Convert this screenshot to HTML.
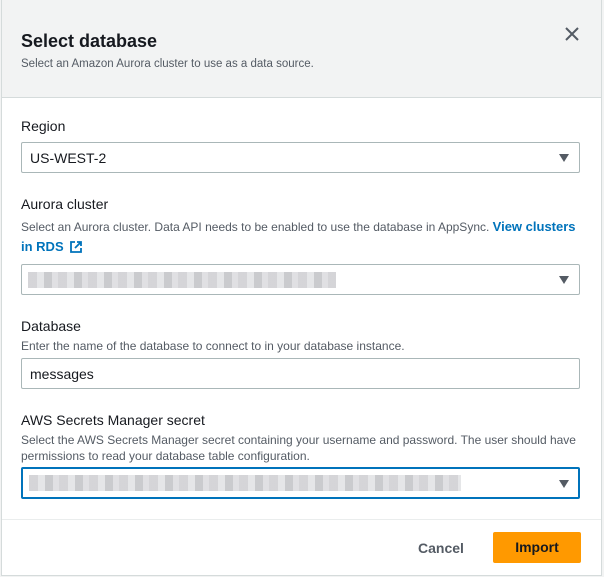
<!DOCTYPE html>
<html><head><meta charset="utf-8"><style>
*{margin:0;padding:0;box-sizing:border-box}
body{width:604px;height:577px;background:#f2f3f3;font-family:"Liberation Sans",sans-serif;position:relative;overflow:hidden;color:#16191f}
.card{position:absolute;left:1px;top:0;width:601px;height:576px;background:#fff;border:1px solid #d5dbdb;border-top:none}
.hdr{position:absolute;left:0;top:0;width:100%;height:98px;background:#f2f3f3;border-bottom:1px solid #d5dbdb}
.a{position:absolute;white-space:nowrap}
.lbl{font-size:14px;color:#16191f}
.desc{font-size:12px;color:#545b64}
.box{position:absolute;width:559px;height:31px;border:1px solid #aab7b8;border-radius:2px;background:#fff}
.tri{position:absolute;right:10px;top:11px;width:0;height:0;border-left:5.5px solid transparent;border-right:5.5px solid transparent;border-top:8px solid #545b64}
.blur{position:absolute;left:6px;top:7px;height:16px;background:repeating-linear-gradient(90deg,#d0d0d4 0 9px,#e2e3e6 9px 16px,#c4c5c9 16px 24px,#dcdde0 24px 30px);opacity:.9}
a{color:#0073bb;font-weight:bold;text-decoration:none}
</style></head><body>
<div class="card">
 <div class="hdr"></div>
 <div class="a" style="left:19px;top:31px;font-size:18px;font-weight:bold">Select database</div>
 <div class="a desc" style="left:19px;top:58px;font-size:11.5px">Select an Amazon Aurora cluster to use as a data source.</div>
 <svg class="a" style="left:563px;top:27px" width="14" height="14" viewBox="0 0 14 14"><path d="M1 1L13 13M13 1L1 13" stroke="#545b64" stroke-width="2"/></svg>

 <div class="a lbl" style="left:19px;top:118px">Region</div>
 <div class="box" style="left:19px;top:142px"><div class="a" style="left:8px;top:7px;font-size:14px">US-WEST-2</div><div class="tri"></div></div>

 <div class="a lbl" style="left:19px;top:196px">Aurora cluster</div>
 <div class="a desc" style="left:19px;top:219px">Select an Aurora cluster. Data API needs to be enabled to use the database in AppSync. <a style="font-size:13px">View clusters</a></div>
 <div class="a" style="left:19px;top:239px;font-size:13px"><a>in RDS</a>
  <svg style="vertical-align:-2px;margin-left:3px" width="12" height="12" viewBox="0 0 12 12"><path d="M5 1H1V11H11V7M7 1H11V5M11 1L5 7" stroke="#0073bb" stroke-width="1.8" fill="none"/></svg></div>
 <div class="box" style="left:19px;top:264px"><div class="blur" style="width:308px"></div><div class="tri"></div></div>

 <div class="a lbl" style="left:19px;top:318px">Database</div>
 <div class="a desc" style="left:19px;top:339px">Enter the name of the database to connect to in your database instance.</div>
 <div class="box" style="left:19px;top:358px"><div class="a" style="left:8px;top:7px;font-size:14px">messages</div></div>

 <div class="a lbl" style="left:19px;top:412px">AWS Secrets Manager secret</div>
 <div class="a desc" style="left:19px;top:433px">Select the AWS Secrets Manager secret containing your username and password. The user should have</div>
 <div class="a desc" style="left:19px;top:449px">permissions to read your database table configuration.</div>
 <div class="box" style="left:19px;top:467px;height:32px;border:2px solid #0073bb"><div class="blur" style="width:432px;top:6px"></div><div class="tri" style="right:9px"></div></div>

 <div class="a" style="left:0;top:519px;width:100%;height:1px;background:#eaeded"></div>
 <div class="a" style="left:416px;top:540px;font-size:14px;font-weight:bold;color:#545b64">Cancel</div>
 <div class="a" style="left:491px;top:532px;width:88px;height:31px;background:#ff9900;border-radius:2px;font-size:14px;font-weight:bold;text-align:center;line-height:31px">Import</div>
</div>
</body></html>
